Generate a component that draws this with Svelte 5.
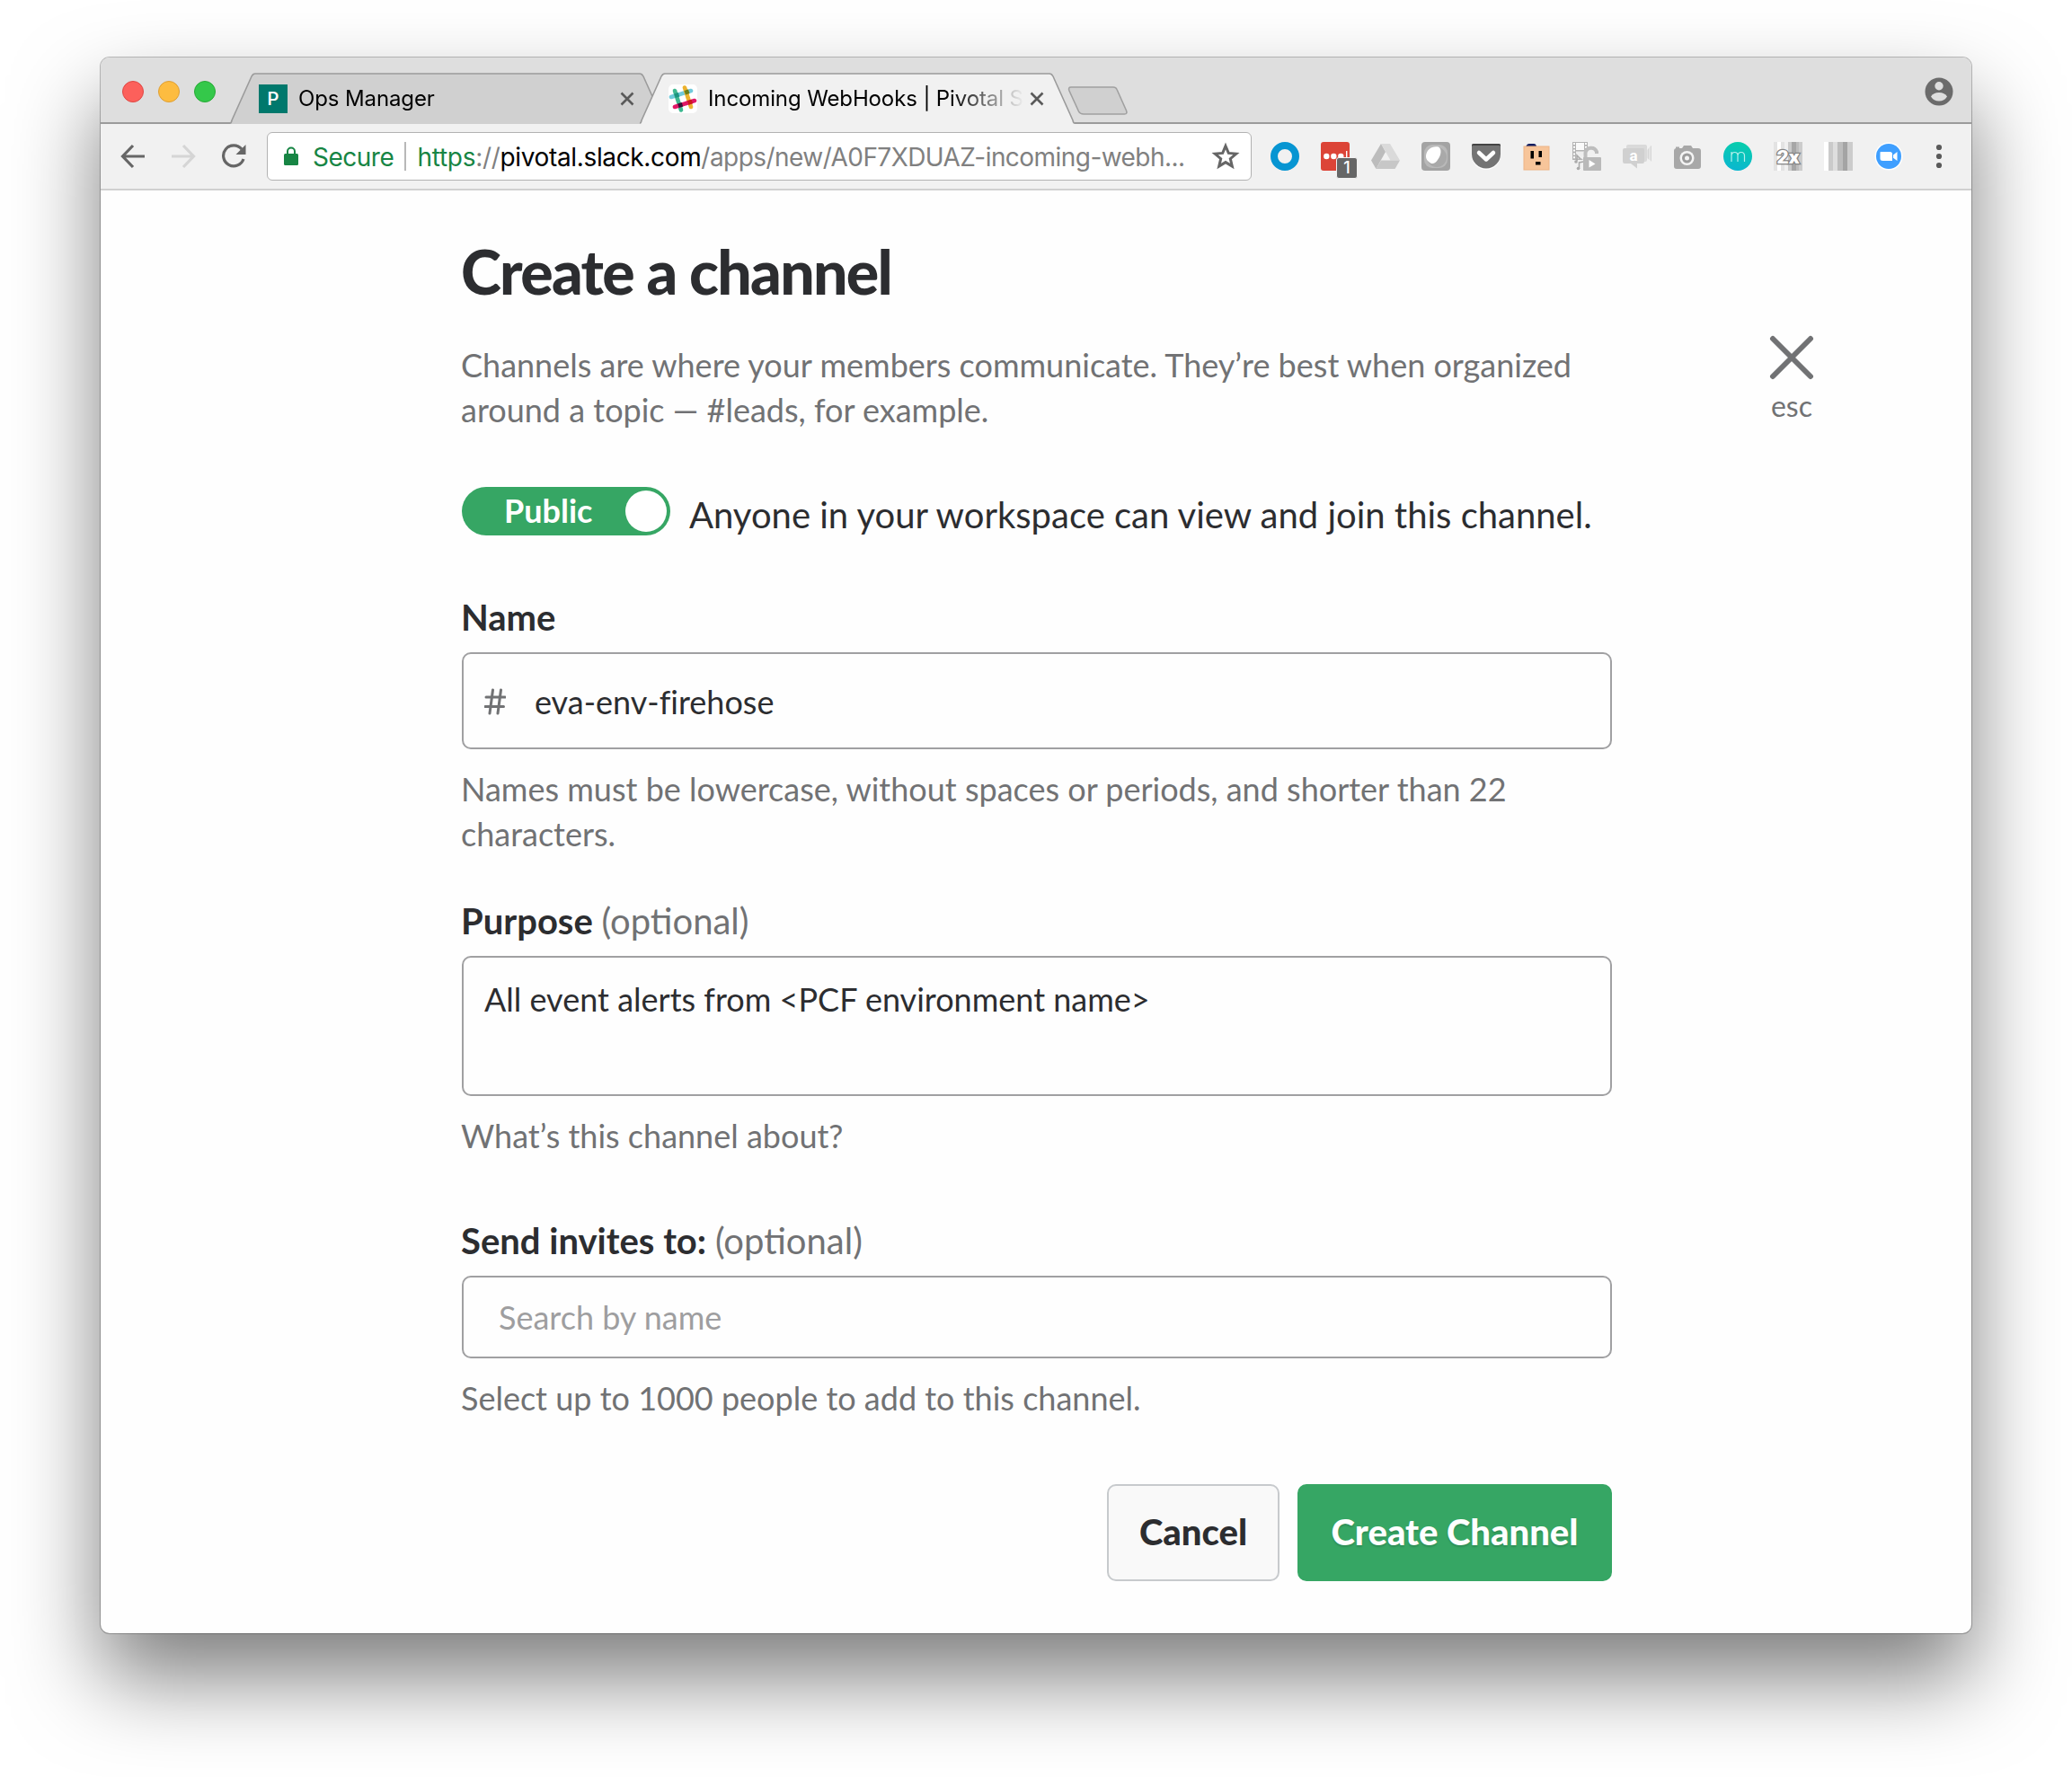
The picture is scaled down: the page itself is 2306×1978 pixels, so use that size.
<script>
  const tabs = [
    { title: 'Ops Manager', icon: 'pivotal', active: false },
    { title: 'Incoming WebHooks | Pivotal S', icon: 'slack', active: true }
  ];
</script>

<div class="window">
  <div class="strip">
    <div class="lights"><i class="red"></i><i class="yellow"></i><i class="green"></i></div>
    {#each tabs as tab}
      <div class="tab" class:active={tab.active}>
        <svg class="shape" width="484" height="57" viewBox="0 0 484 57">
          <path class="fill" d="M0 57 L1 55 L24 4 Q25.500 1 28 1 H456 Q458.500 1 460 4 L483 55 L484 57 Z" />
          <path class="line" d="M0 56 Q1.500 56 2 53 L24 4 Q25.500 1 28 1 H456 Q458.500 1 460 4 L482 53 Q482.500 56 484 56" />
        </svg>
        {#if tab.icon === 'pivotal'}
          <span class="fav pivotal">P</span>
        {:else}
          <svg class="fav" width="32" height="32" viewBox="0 0 32 32">
            <rect width="32" height="32" rx="5" fill="#fff" />
            <g stroke-width="4.600" stroke-linecap="round" fill="none">
              <path d="M3 14 L25 7" stroke="#70cadb" />
              <path d="M7 7 L14 28.500" stroke="#3eb890" />
              <path d="M18 3.500 L25 25" stroke="#ecb22e" />
              <path d="M7 25 L29 18" stroke="#e01765" />
            </g>
            <path d="M6.300 10.500l4.500-1.500 1.500 4.500-4.500 1.500z" fill="#1c9480" />
            <path d="M17.500 7l4.500-1.500 1.500 4.500-4.500 1.500z" fill="#6b7f1a" />
            <path d="M10.200 21.600l4.500-1.500 1.500 4.500-4.500 1.500z" fill="#361238" />
            <path d="M21 18.200l4.500-1.500 1.500 4.500-4.500 1.500z" fill="#cc1a1c" />
          </svg>
        {/if}
        <span class="title">{tab.title}</span>
        <svg class="x" width="16" height="16" viewBox="0 0 16 16"><path d="M1.500 1.500l13 13M14.500 1.500l-13 13" /></svg>
      </div>
    {/each}
    <svg class="newtab" width="68" height="32" viewBox="0 0 68 32">
      <path d="M4 1 H51 Q54 1 55 3.500 L65.500 27 Q67 31 63.500 31 H18 Q14 31 12.500 28 L2 5 Q0.500 1 4 1Z" />
    </svg>
    <svg class="profile" width="32" height="32" viewBox="0 0 32 32">
      <circle cx="16" cy="16" r="15.500" fill="#6b6b6b" />
      <circle cx="16" cy="9.700" r="4.700" fill="#dedede" />
      <path d="M7 21.500 Q9.500 17 16 17 T25 21.500 Q22 26.500 16 26.500 T7 21.500Z" fill="#dedede" />
    </svg>
  </div>

  <div class="toolbar">
    <svg class="nav" width="28" height="28" viewBox="0 0 28 28"><path d="M14 2 L2.500 14 L14 26 M3 14 H27" /></svg>
    <svg class="nav off" width="28" height="28" viewBox="0 0 28 28"><path d="M14 2 L25.500 14 L14 26 M25 14 H1" /></svg>
    <svg class="nav" width="28" height="28" viewBox="0 0 28 28">
      <path d="M23 6 A11.500 11.500 0 1 0 25 17" />
      <path d="M27.500 1 V12 H16.500Z" fill="#666" stroke="none" />
    </svg>
    <div class="address">
      <svg class="lock" width="16" height="22" viewBox="0 0 16 22">
        <rect y="8" width="16" height="13" rx="1.500" fill="#178544" />
        <path d="M4 9 V5.500 a4 4 0 0 1 8 0 V9" fill="none" stroke="#178544" stroke-width="2" />
      </svg>
      <span class="secure">Secure</span>
      <i class="divider"></i>
      <span class="url"><b>https</b>://<em>pivotal.slack.com</em><span class="path">/apps/new/A0F7XDUAZ-incoming-webh...</span></span>
      <svg class="star" width="32" height="32" viewBox="0 0 32 32">
        <path d="M16 4.500 L19.300 12.400 L27.800 13.100 L21.300 18.700 L23.300 27 L16 22.600 L8.700 27 L10.700 18.700 L4.200 13.100 L12.700 12.400Z" />
      </svg>
    </div>
    <div class="extensions">
      <svg viewBox="0 0 32 32"><circle cx="16" cy="16" r="12" fill="none" stroke="#0795d2" stroke-width="8" /></svg>
      <div class="badged">
        <svg viewBox="0 0 32 32">
          <rect width="32" height="32" rx="3" fill="#dc4437" />
          <circle cx="6.300" cy="16" r="3.200" fill="#fff" /><circle cx="14.300" cy="16" r="3.200" fill="#fff" /><circle cx="22.300" cy="16" r="3.200" fill="#fff" />
          <rect x="28" y="10" width="1.400" height="12" fill="#fff" />
        </svg>
        <span class="badge">1</span>
      </div>
      <svg viewBox="0 0 32 32">
        <path d="M11 2 L16 11 L5.500 30 L0 20.500Z" fill="#bcbcbc" />
        <path d="M11 2 H21 L32 20.500 H21.500Z" fill="#dadada" />
        <path d="M5.500 30 L11 20.500 H32 L26.500 30Z" fill="#c7c7c7" />
      </svg>
      <svg viewBox="0 0 32 32">
        <rect width="32" height="32" rx="4" fill="#a3a3a3" />
        <rect x="3" y="3" width="26" height="26" rx="9" fill="#b9b9b9" />
        <circle cx="17" cy="17" r="11" fill="#a9a9a9" />
        <path d="M5 15 C6 8 12 4 19 5.500 C23 8 22 15 18 20 C15 25 11 25 8 22 Q4.500 19 5 15Z" fill="#fff" />
      </svg>
      <svg viewBox="0 0 32 32">
        <path d="M2 3 H30 Q32 3 32 5 V15 A16 16 0 0 1 0 15 V5 Q0 3 2 3Z" fill="#fff" />
        <path d="M2 2 H30 Q32 2 32 4 V13.500 A16 16 0 0 1 0 13.500 V4 Q0 2 2 2Z" fill="#747474" />
        <path d="M0 5 V4 Q0 2 2 2 H30 Q32 2 32 4 V5 Q32 4 30 4 H2 Q0 4 0 5Z" fill="#444" />
        <path d="M8 12 L16 19.500 L24 12" fill="none" stroke="#fff" stroke-width="4.500" stroke-linecap="round" stroke-linejoin="round" />
      </svg>
      <svg viewBox="0 0 32 32">
        <path d="M4 6 Q5 2 8 2 H13 Q16 2 16 6Z" fill="#0f1c60" />
        <rect x="2" y="5" width="28" height="26" fill="#f7c59a" stroke="#eeb485" stroke-width="1" />
        <rect x="9.500" y="10" width="3.500" height="8.500" /><rect x="18.500" y="10" width="3.500" height="7" />
        <rect x="15" y="22" width="5.500" height="3.500" />
      </svg>
      <svg viewBox="0 0 32 32">
        <rect width="17" height="20" fill="#b4b4b4" />
        <rect x="4" y="1" width="9" height="8" fill="#fafafa" /><rect x="4" y="10.500" width="9" height="8" fill="#eee" />
        <path d="M2 1 V20 M15 1 V20" stroke="#fff" stroke-width="2" stroke-dasharray="2 1.800" />
        <path d="M11 19 L17 14 V10" fill="none" stroke="#f1f1f1" stroke-width="5" />
        <path d="M14.500 18 V12 A6.500 6.500 0 0 1 27 11 V13" fill="none" stroke="#bdbdbd" stroke-width="4" />
        <rect x="12" y="17" width="20" height="15" rx="1" fill="#b9b9b9" />
        <path d="M18.500 20 L25.500 24.500 L18.500 28.500Z" fill="#fff" />
        <circle cx="4" cy="22" r="1.800" fill="#aaa" /><path d="M5 21 V15 L9 19 M7.500 30 V23 L12 22" fill="none" stroke="#aaa" stroke-width="1.600" /><circle cx="6.500" cy="29.500" r="1.800" fill="#aaa" />
      </svg>
      <svg viewBox="0 0 32 32">
        <rect x="4" y="3" width="23" height="19" rx="2" fill="#dadada" />
        <path d="M2 7 H23 Q24 7 24 9 V22 Q24 24 22 24 H16 V29.500 L9 24 H2 Q0 24 0 22 V9 Q0 7 2 7Z" fill="#d0d0d0" />
        <path d="M27.500 9 L29.500 6 V20 L27.500 18Z M30.500 5 L32 4 V22 L30.500 20Z" fill="#d6d6d6" />
        <text x="12" y="20.500" text-anchor="middle" font-size="17" font-weight="700" fill="#fff">a</text>
      </svg>
      <svg viewBox="0 0 32 32">
        <path d="M4 7 H10 L12 4 H20 L22 7 H28 Q31 7 31 10 V27 Q31 30 28 30 H4 Q1 30 1 27 V10 Q1 7 4 7Z" fill="#a8a8a8" />
        <rect x="3" y="5.500" width="4" height="2" fill="#a8a8a8" />
        <circle cx="15.500" cy="18" r="8" fill="#f4f4f4" /><circle cx="15.500" cy="18" r="4" fill="none" stroke="#9c9c9c" stroke-width="3" />
      </svg>
      <svg viewBox="0 0 32 32">
        <defs><linearGradient id="teal" x1="0.500" y1="0" x2="0.300" y2="1"><stop offset="0" stop-color="#08cdac" /><stop offset="1" stop-color="#0ab6d1" /></linearGradient></defs>
        <circle cx="16" cy="16" r="16" fill="url(#teal)" />
        <path d="M9 22 V11 M9 15 Q9.500 11.500 12.500 11.500 Q16 11.500 16 15 V22 M16 15 Q16.500 11.500 19.800 11.500 Q23.500 11.500 23.500 15.500 V22" fill="none" stroke="#b6f0ec" stroke-width="1.200" />
      </svg>
      <svg viewBox="0 0 32 32">
        <rect width="4" height="32" fill="#e3e3e3" /><rect x="4" width="4" height="32" fill="#fff" /><rect x="8" width="4" height="32" fill="#e3e3e3" /><rect x="12" width="4" height="32" fill="#f0f0f0" /><rect x="16" width="4" height="32" fill="#cacaca" /><rect x="20" width="5" height="32" fill="#a6a6a6" /><rect x="25" width="3" height="32" fill="#bcbcbc" /><rect x="28" width="4" height="32" fill="#cccccc" />
        <text class="twox" x="16" y="24" text-anchor="middle" textLength="25" lengthAdjust="spacingAndGlyphs">2x</text>
      </svg>
      <svg viewBox="0 0 32 32">
        <rect width="5" height="32" fill="#fff" /><rect x="5" width="5" height="32" fill="#cacaca" /><rect x="10" width="5" height="32" fill="#dedede" /><rect x="15" width="6" height="32" fill="#bcbcbc" /><rect x="21" width="5" height="32" fill="#a4a4a4" /><rect x="26" width="6" height="32" fill="#cccccc" />
      </svg>
      <svg viewBox="0 0 32 32">
        <circle cx="16" cy="16" r="15.500" fill="#fff" /><circle cx="16" cy="16" r="14" fill="#3f9fff" />
        <path d="M7 11 H17.500 Q20 11 20 13.500 V21 H9.500 Q6.500 21 6.500 18.500 V11.500Z M21 14.500 L25.500 11 V21 L21 17.800Z" fill="#fff" />
      </svg>
      <svg viewBox="0 0 32 32" fill="#5a5a5a"><circle cx="16" cy="6" r="3.100" /><circle cx="16" cy="16" r="3.100" /><circle cx="16" cy="26" r="3.100" /></svg>
    </div>
  </div>

  <div class="page">
    <main>
      <h1>Create a channel</h1>
      <p class="intro">Channels are where your members communicate. They’re best when organized<br />around a topic — #leads, for example.</p>
      <div class="visibility">
        <div class="toggle"><span>Public</span><i></i></div>
        <span class="note">Anyone in your workspace can view and join this channel.</span>
      </div>

      <div class="label">Name</div>
      <div class="field name">
        <svg width="24" height="30" viewBox="0 0 24 30"><path d="M9.500 2 L6 28 M18.500 2 L15 28 M2 10 H23 M1 20.500 H21.500" /></svg>
        <span>eva-env-firehose</span>
      </div>
      <p class="hint">Names must be lowercase, without spaces or periods, and shorter than 22<br />characters.</p>

      <div class="label purpose">Purpose <span>(optional)</span></div>
      <div class="field area">All event alerts from &lt;PCF environment name&gt;</div>
      <p class="hint">What’s this channel about?</p>

      <div class="label invites">Send invites to: <span>(optional)</span></div>
      <div class="field search">Search by name</div>
      <p class="hint">Select up to 1000 people to add to this channel.</p>

      <div class="actions">
        <button class="cancel">Cancel</button>
        <button class="create">Create Channel</button>
      </div>
    </main>
    <div class="close">
      <svg width="50" height="50" viewBox="0 0 50 50"><path d="M4 4 L46 46 M46 4 L4 46" /></svg>
      <span>esc</span>
    </div>
  </div>
</div>

<style>
  :global(body) {
    background: #fff;
  }
  :global(#app) {
    display: flow-root;
  }
  .window {
    box-sizing: border-box;
    width: 2082px;
    height: 1754px;
    margin: 64px 112px 160px;
    border-radius: 10px;
    overflow: hidden;
    background: #fefefe;
    font-family: Lato, sans-serif;
    box-shadow:
      0 0 0 1px rgba(0, 0, 0, 0.25),
      0 50px 96px rgba(0, 0, 0, 0.51);
  }
  .strip {
    display: flex;
    align-items: flex-end;
    height: 74px;
    background: linear-gradient(#dedede, #dedede 72px, #9b9b9b 72px);
  }
  .lights {
    display: flex;
    gap: 16px;
    width: 120px;
    padding: 0 0 24px 24px;
  }
  .lights i {
    box-sizing: border-box;
    width: 24px;
    height: 24px;
    border-radius: 50%;
    border: 1px solid;
  }
  .lights .red {
    background: #fc605b;
    border-color: #df4744;
  }
  .lights .yellow {
    background: #fdbc40;
    border-color: #de9f34;
  }
  .lights .green {
    background: #34c84a;
    border-color: #27aa35;
  }
  .tab {
    position: relative;
    display: flex;
    align-items: center;
    box-sizing: border-box;
    width: 484px;
    height: 57px;
    padding: 0 0 0 32px;
  }
  .tab.active {
    margin-left: -28px;
  }
  .shape {
    position: absolute;
    left: 0;
    top: 0;
  }
  .fill {
    fill: #d0d0d0;
  }
  .active .fill {
    fill: #f1f1f1;
  }
  .line {
    fill: none;
    stroke: #9b9b9b;
    stroke-width: 1.6;
  }
  .fav {
    position: relative;
    flex: none;
    width: 32px;
    height: 32px;
  }
  .pivotal {
    background: #00786c;
    color: #fff;
    font: 500 20px/32px Roboto, sans-serif;
    text-align: center;
  }
  .title {
    position: relative;
    flex: none;
    width: 351px;
    margin-left: 12px;
    font: 24px/32px Inter, sans-serif;
    letter-spacing: -0.12px;
    color: #000;
    white-space: nowrap;
    -webkit-mask-image: linear-gradient(90deg, #000 270px, transparent 352px);
    mask-image: linear-gradient(90deg, #000 270px, transparent 352px);
  }
  .x {
    position: relative;
    flex: none;
    margin-left: 7px;
  }
  .x path {
    fill: none;
    stroke: #5a5a5a;
    stroke-width: 2.6;
  }
  .newtab {
    margin: 0 0 10px -8px;
  }
  .newtab path {
    fill: #d0d0d0;
    stroke: #a0a0a0;
    stroke-width: 1.6;
  }
  .profile {
    margin: 0 20px 20px auto;
  }
  .toolbar {
    display: flex;
    align-items: center;
    box-sizing: border-box;
    height: 74px;
    padding: 0 20px 0 22px;
    background: #f1f1f1;
    border-bottom: 2px solid #d0d0d0;
  }
  .nav {
    flex: none;
    margin-right: 28px;
    fill: none;
    stroke: #666;
    stroke-width: 3.2;
  }
  .nav.off {
    stroke: #d5d5d5;
  }
  .address {
    display: flex;
    align-items: center;
    flex: none;
    box-sizing: border-box;
    width: 1096px;
    height: 54px;
    margin-left: -5px;
    padding: 0 12px 0 18px;
    border: 1.5px solid #b2b2b2;
    border-radius: 6px;
    background: #fff;
    font: 28px/50px Inter, sans-serif;
    white-space: nowrap;
  }
  .secure {
    width: 102px;
    margin-left: 16px;
    padding-top: 1px;
    color: #178544;
    letter-spacing: -0.5px;
  }
  .divider {
    width: 1.5px;
    height: 32px;
    background: #b8b8b8;
  }
  .url {
    flex: 1;
    margin-left: 13px;
    padding-top: 1px;
    color: #808080;
    letter-spacing: -0.3px;
  }
  .url b {
    color: #178544;
    font-weight: 400;
  }
  .url em {
    color: #000;
    font-style: normal;
    letter-spacing: -0.35px;
  }
  .path {
    letter-spacing: -0.55px;
  }
  .star {
    flex: none;
    fill: none;
    stroke: #666;
    stroke-width: 3;
  }
  .extensions {
    display: flex;
    gap: 24px;
    margin-left: auto;
    font-family: Roboto, sans-serif;
  }
  .extensions svg {
    display: block;
    width: 32px;
    height: 32px;
  }
  .badged {
    position: relative;
  }
  .badge {
    position: absolute;
    left: 17px;
    top: 17px;
    width: 22px;
    height: 22px;
    border: 1px solid #f1f1f1;
    border-radius: 3px;
    background: #666;
    color: #fff;
    font: 500 18px/22px Inter, sans-serif;
    text-align: center;
  }
  .twox {
    font: 900 21px Roboto, sans-serif;
    fill: #fff;
    stroke: #858585;
    stroke-width: 2.4;
    paint-order: stroke;
  }
  .page {
    display: flex;
    padding: 50px 0 0 402px;
    color: #2c2d30;
  }
  main {
    width: 1280px;
  }
  h1 {
    margin: 0 0 39px -1px;
    font-size: 68px;
    font-weight: 900;
    line-height: 80px;
    letter-spacing: -1.7px;
  }
  p {
    margin: 0 -20px 0 -1px;
    color: #717274;
    font-size: 36px;
    line-height: 50px;
    white-space: nowrap;
  }
  .visibility {
    display: flex;
    align-items: flex-start;
    height: 58px;
    margin: 61px 0 62px;
  }
  .toggle {
    display: flex;
    align-items: center;
    justify-content: space-between;
    box-sizing: border-box;
    width: 232px;
    height: 54px;
    padding: 0 4px 0 47px;
    border-radius: 27px;
    background: #36a664;
    color: #fff;
    font-size: 36px;
    font-weight: 700;
    line-height: 52px;
  }
  .toggle span {
    height: 54px;
  }
  .toggle i {
    width: 46px;
    height: 46px;
    border-radius: 50%;
    background: #fff;
  }
  .note {
    margin-left: 21px;
    padding-top: 4px;
    font-size: 40px;
    line-height: 54px;
    white-space: nowrap;
  }
  .label {
    margin: 0 0 14px -1px;
    font-size: 40px;
    font-weight: 700;
    line-height: 50px;
  }
  .label span {
    color: #717274;
    font-weight: 400;
  }
  .purpose {
    margin-top: 47px;
  }
  .invites {
    margin-top: 67px;
  }
  .field {
    display: flex;
    align-items: center;
    box-sizing: border-box;
    border: 2px solid #a0a0a2;
    border-radius: 10px;
    background: #fefefe;
    font-size: 36px;
    line-height: 50px;
    margin-bottom: 19px;
  }
  .field.name {
    height: 108px;
    padding: 2px 0 0 23px;
  }
  .field svg {
    fill: none;
    stroke: #717274;
    stroke-width: 3;
    stroke-linecap: round;
  }
  .field svg + span {
    margin-left: 32px;
    font-variant-ligatures: none;
  }
  .area {
    align-items: flex-start;
    height: 156px;
    padding: 21px 23px;
  }
  .search {
    height: 92px;
    padding: 0 0 1px 39px;
    color: #9e9ea0;
  }
  .actions {
    display: flex;
    justify-content: flex-end;
    gap: 20px;
    margin-top: 71px;
  }
  button {
    box-sizing: border-box;
    height: 108px;
    padding: 0 0 3px;
    border: 2px solid #c7cacd;
    border-radius: 10px;
    font: 900 40px/50px Lato, sans-serif;
  }
  .cancel {
    width: 192px;
    background: #f9f9f9;
    color: #2c2d30;
  }
  .create {
    width: 350px;
    background: #36a664;
    border-color: #36a664;
    color: #fff;
    text-shadow: 0 2px 2px rgba(0, 0, 0, 0.15);
  }
  .close {
    display: flex;
    flex-direction: column;
    align-items: center;
    width: 60px;
    margin: 111px 0 0 170px;
    color: #717274;
    font-size: 32px;
    line-height: 40px;
  }
  .close svg {
    fill: none;
    stroke: #717274;
    stroke-width: 6;
    stroke-linecap: round;
  }
  .close span {
    margin-top: 9px;
  }
</style>
